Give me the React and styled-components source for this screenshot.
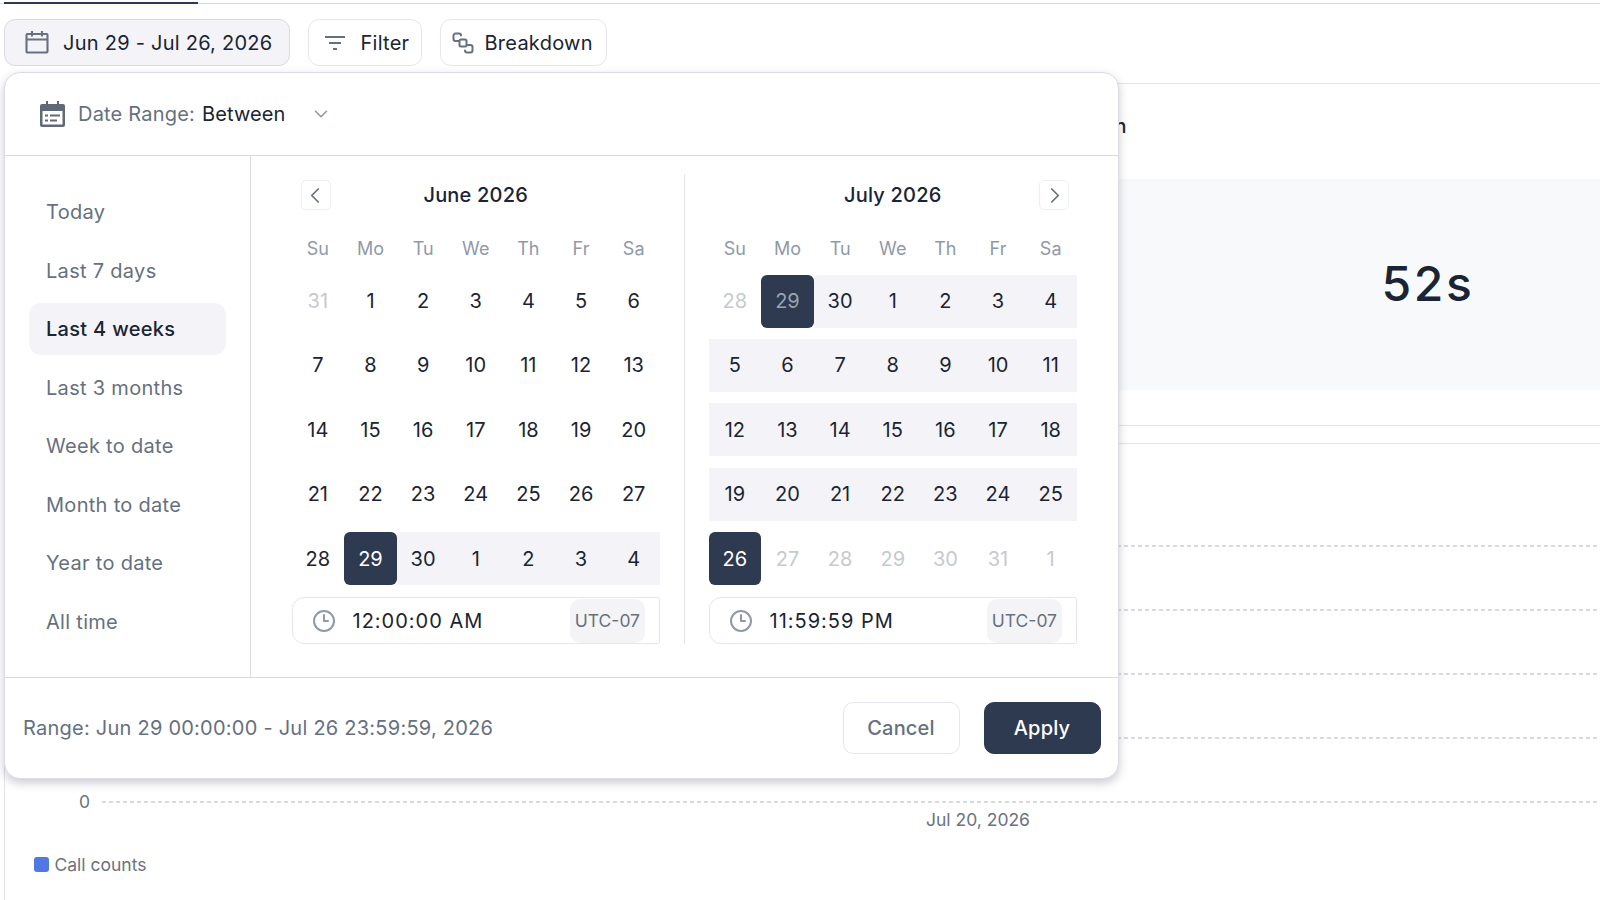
import * as React from "react";
import styled, { createGlobalStyle } from "styled-components";
import { ChevronDown, ChevronLeft, ChevronRight, Clock3 } from "lucide-react";

const GlobalStyle = createGlobalStyle`
  html,
  body {
    margin: 0;
    background: #fff;
  }
  * {
    box-sizing: border-box;
  }
`;

const Page = styled.div`
  position: relative;
  width: 1600px;
  height: 900px;
  overflow: hidden;
  background: #fff;
  color: #1a2433;
  font-family: Inter, "Liberation Sans", sans-serif;
  font-size: 20px;
`;

const TabLine = styled.div`
  height: 4px;
  border-bottom: 1.5px solid #d9dae3;
  padding-left: 4px;
`;

const ActiveTab = styled.div`
  width: 194px;
  height: 4px;
  border-bottom: 2px solid #2d3a4f;
`;

const Toolbar = styled.div`
  display: flex;
  gap: 17.5px;
  padding: 15px 0 0 4px;
`;

const ToolButton = styled.div`
  display: flex;
  align-items: center;
  gap: ${(p) => p.$gap}px;
  width: ${(p) => p.$width}px;
  height: 47px;
  padding-left: ${(p) => p.$pad}px;
  background: ${(p) => (p.$active ? "#f4f4f8" : "#fff")};
  border: 1.5px solid ${(p) => (p.$active ? "#d9dae6" : "#e6e7ee")};
  border-radius: 11px;
  letter-spacing: 0.25px;
`;

const Card = styled.div`
  width: 2000px;
  height: 840px;
  margin: 17px 0 0 4px;
  border: 1.5px solid #e3e4ea;
  border-radius: 16px;
`;

const Summary = styled.div`
  margin-left: 950px;
  padding-bottom: 35px;
  border-bottom: 1.5px solid #e3e4ea;
`;

const SummaryTitle = styled.div`
  height: 95px;
  padding: 29.5px 0 0 8px;
  font-weight: 500;
  line-height: 24px;
`;

const MetricBox = styled.div`
  display: flex;
  align-items: center;
  justify-content: center;
  width: 946px;
  height: 211px;
  padding-bottom: 2px;
  background: #f8f9fa;
  font-size: 48px;
  font-weight: 450;
  letter-spacing: 2.6px;
`;

const ChartHead = styled.div`
  height: 18px;
  border-bottom: 1.5px solid #e3e4ea;
`;

const Plot = styled.div`
  display: flex;
  flex-direction: column;
  gap: 62.5px;
  padding-top: 101px;
`;

const GridRow = styled.div`
  display: flex;
  align-items: center;
  gap: 12px;
  height: 1.5px;
`;

const AxisValue = styled.span`
  width: 85px;
  text-align: right;
  color: #6b7280;
  font-size: 17.5px;
`;

const GridLine = styled.div`
  flex: 1;
  height: 1.5px;
  background: repeating-linear-gradient(to right, #d8dae0 0 4px, transparent 4px 7px);
`;

const AxisDate = styled.div`
  margin: 7px 0 0 921px;
  color: #6b7280;
  font-size: 17.5px;
  line-height: 20px;
`;

const Legend = styled.div`
  display: flex;
  align-items: center;
  gap: 6px;
  margin: 25px 0 0 28.5px;
  color: #6b7280;
  font-size: 17.5px;
  line-height: 20px;
`;

const LegendSwatch = styled.span`
  width: 15px;
  height: 15px;
  border-radius: 3px;
  background: #4f78e4;
`;

const Popover = styled.div`
  position: absolute;
  top: 72px;
  left: 4px;
  display: flex;
  flex-direction: column;
  width: 1115px;
  height: 707px;
  background: #fff;
  border: 1.5px solid #dcdce8;
  border-radius: 16px;
  box-shadow: 0 4px 10px rgba(70, 70, 100, 0.28);
`;

const PopoverHead = styled.div`
  display: flex;
  align-items: center;
  height: 83px;
  padding-left: 34px;
  border-bottom: 1.5px solid #d9dae6;
`;

const HeadLabel = styled.span`
  margin-left: 12px;
  color: #667080;
  letter-spacing: 0.2px;
`;

const HeadValue = styled.span`
  margin-left: 7px;
  color: #1a2433;
  letter-spacing: 0.1px;
`;

const HeadCaret = styled(ChevronDown)`
  margin-left: 25px;
  color: #8f99a8;
`;

const PopoverBody = styled.div`
  display: flex;
  height: 522px;
  border-bottom: 1.5px solid #d9dae6;
`;

const Sidebar = styled.div`
  display: flex;
  flex-direction: column;
  gap: 6.5px;
  width: 245.5px;
  padding: 30px 0 0 24px;
  border-right: 1.5px solid #d9dae6;
`;

const Preset = styled.div`
  display: flex;
  align-items: center;
  width: 197px;
  height: 52px;
  padding-left: 17px;
  border-radius: 12px;
  background: ${(p) => (p.$active ? "#f4f4f8" : "transparent")};
  color: ${(p) => (p.$active ? "#1a2433" : "#667080")};
  font-weight: ${(p) => (p.$active ? 500 : 400)};
  letter-spacing: 0.3px;
`;

const Calendars = styled.div`
  display: flex;
  gap: 23.5px;
  padding: 18px 0 0 41px;
`;

const Divider = styled.div`
  width: 1.5px;
  height: 470px;
  background: #e3e4ea;
`;

const Month = styled.div`
  width: 368.5px;
  padding-top: 6px;
`;

const MonthHead = styled.div`
  position: relative;
  display: flex;
  align-items: center;
  justify-content: center;
  height: 30px;
  font-weight: 500;
  letter-spacing: 0.2px;
`;

const NavButton = styled.div`
  position: absolute;
  top: 0;
  ${(p) => (p.$right ? "right: 8px; padding-left: 2px;" : "left: 9px; padding-right: 2px;")}
  display: flex;
  align-items: center;
  justify-content: center;
  width: 30px;
  height: 30px;
  border: 1px solid #eeeff3;
  border-radius: 5px;
  color: #667080;
`;

const Week = styled.div`
  display: grid;
  grid-template-columns: repeat(7, 1fr);
`;

const WeekHead = styled(Week)`
  height: 20px;
  margin: 28.5px 0 16px;
  color: #8f99a8;
  font-size: 18px;
  line-height: 20px;
  text-align: center;
`;

const Weeks = styled.div`
  display: flex;
  flex-direction: column;
  gap: 11.4px;
`;

const dayBackground = (p) => {
  if (p.$edge) return "#2d3a4f";
  return p.$range ? "#f4f4f8" : "transparent";
};

const dayColor = (p) => {
  if (p.$edge) return p.$muted ? "#9aa3b2" : "#fff";
  return p.$muted ? "#c6c9cf" : "#1a2433";
};

const Day = styled.div`
  display: flex;
  align-items: center;
  justify-content: center;
  height: 53px;
  border-radius: ${(p) => (p.$edge ? "6px" : "0")};
  background: ${dayBackground};
  color: ${dayColor};
`;

const TimeField = styled.div`
  display: flex;
  align-items: center;
  height: 47px;
  margin-top: 12px;
  padding: 0 14px 0 19px;
  border: 1.5px solid #e6e7ee;
  border-right-width: 1px;
  border-radius: 12px 2px 2px 12px;
`;

const TimeClock = styled(Clock3)`
  flex: none;
  color: #8f99a8;
`;

const TimeValue = styled.span`
  flex: 1;
  margin-left: 17px;
  letter-spacing: 1px;
  line-height: 22px;
`;

const ZoneTag = styled.span`
  display: flex;
  align-items: center;
  height: 44px;
  padding: 0 5px;
  border-radius: 10px;
  background: #f4f4f6;
  color: #667080;
  font-size: 17.5px;
`;

const PopoverFoot = styled.div`
  display: flex;
  flex: 1;
  align-items: center;
  gap: 24px;
  padding: 0 17.5px 0 18px;
`;

const RangeText = styled.span`
  flex: 1;
  color: #667080;
  letter-spacing: 0.24px;
`;

const FootButton = styled.div`
  display: flex;
  align-items: center;
  justify-content: center;
  width: 117px;
  height: 52px;
  border: 1.5px solid ${(p) => (p.$primary ? "#2d3a4f" : "#e6e7ee")};
  border-radius: 10px;
  background: ${(p) => (p.$primary ? "#2d3a4f" : "#fff")};
  color: ${(p) => (p.$primary ? "#fff" : "#667080")};
  font-weight: 500;
  letter-spacing: 0.2px;
`;

const CalendarIcon = () => (
  <svg width="24" height="24" viewBox="0 0 24 24" fill="none" stroke="#667080" strokeWidth="2.1">
    <rect x="1.5" y="3" width="21" height="18.5" rx="1" />
    <path d="M1.5 8.5h21M7 0v5.5M17 0v5.5" />
  </svg>
);

const FilterIcon = () => (
  <svg width="24" height="24" viewBox="0 0 24 24" fill="none" stroke="#667080" strokeWidth="2">
    <path d="M2 6h20M6 12h12M10 18h4" />
  </svg>
);

const BreakdownIcon = () => (
  <svg width="24" height="24" viewBox="0 0 24 24" fill="none" stroke="#667080" strokeWidth="2" strokeLinecap="round">
    <path d="M7.5 10H4.5a2 2 0 0 1-2-2V4.5a2 2 0 0 1 2-2H8a2 2 0 0 1 2 2" />
    <rect x="8.5" y="8.5" width="7" height="7" rx="1.5" />
    <path d="M16.5 14h3a2 2 0 0 1 2 2v3.5a2 2 0 0 1-2 2H16a2 2 0 0 1-2-2" />
  </svg>
);

const RangeIcon = () => (
  <svg width="27" height="27" viewBox="0 0 27 27">
    <path d="M7 0h2v3h9V0h2v3h4a2 2 0 0 1 2 2v19a2 2 0 0 1-2 2H3a2 2 0 0 1-2-2V5a2 2 0 0 1 2-2h4z" fill="#5f6977" />
    <rect x="3.5" y="10" width="20" height="13.5" fill="#fff" />
    <path d="M6 13.5h3v2H6zM11 13.5h10v2H11zM6 18.5h3v2H6zM11 18.5h7v2h-7z" fill="#5f6977" />
  </svg>
);

const june = [
  [31, 1, 2, 3, 4, 5, 6],
  [7, 8, 9, 10, 11, 12, 13],
  [14, 15, 16, 17, 18, 19, 20],
  [21, 22, 23, 24, 25, 26, 27],
  [28, 29, 30, 1, 2, 3, 4],
];

const july = [
  [28, 29, 30, 1, 2, 3, 4],
  [5, 6, 7, 8, 9, 10, 11],
  [12, 13, 14, 15, 16, 17, 18],
  [19, 20, 21, 22, 23, 24, 25],
  [26, 27, 28, 29, 30, 31, 1],
];

const weekdays = ["Su", "Mo", "Tu", "We", "Th", "Fr", "Sa"];

const presets = [
  "Today",
  "Last 7 days",
  "Last 4 weeks",
  "Last 3 months",
  "Week to date",
  "Month to date",
  "Year to date",
  "All time",
];

const juneDay = (row, col) => ({
  $muted: row === 0 && col === 0,
  $edge: row === 4 && col === 1,
  $range: row === 4 && col > 1,
});

const julyDay = (row, col) => ({
  $muted: (row === 0 && col < 2) || (row === 4 && col > 0),
  $edge: (row === 0 && col === 1) || (row === 4 && col === 0),
  $range: (row === 0 && col > 1) || (row > 0 && row < 4),
});

const CalendarMonth = ({ title, weeks, dayProps, time, side }) => (
  <Month>
    <MonthHead>
      {side === "left" && (
        <NavButton>
          <ChevronLeft size={27} strokeWidth={1.6} />
        </NavButton>
      )}
      {title}
      {side === "right" && (
        <NavButton $right>
          <ChevronRight size={27} strokeWidth={1.6} />
        </NavButton>
      )}
    </MonthHead>
    <WeekHead>
      {weekdays.map((day) => (
        <span key={day}>{day}</span>
      ))}
    </WeekHead>
    <Weeks>
      {weeks.map((week, row) => (
        <Week key={row}>
          {week.map((day, col) => (
            <Day key={col} {...dayProps(row, col)}>
              {day}
            </Day>
          ))}
        </Week>
      ))}
    </Weeks>
    <TimeField>
      <TimeClock size={24} strokeWidth={2} />
      <TimeValue>{time}</TimeValue>
      <ZoneTag>UTC-07</ZoneTag>
    </TimeField>
  </Month>
);

export default function App() {
  return (
    <Page>
      <GlobalStyle />
      <TabLine>
        <ActiveTab />
      </TabLine>
      <Toolbar>
        <ToolButton $active $width={286} $pad={20} $gap={14}>
          <CalendarIcon />
          Jun 29 - Jul 26, 2026
        </ToolButton>
        <ToolButton $width={114.5} $pad={14} $gap={14}>
          <FilterIcon />
          Filter
        </ToolButton>
        <ToolButton $width={167.5} $pad={10} $gap={10}>
          <BreakdownIcon />
          Breakdown
        </ToolButton>
      </Toolbar>
      <Card>
        <Summary>
          <SummaryTitle>Average duration</SummaryTitle>
          <MetricBox>52s</MetricBox>
        </Summary>
        <ChartHead />
        <Plot>
          {["", "", "", "", "0"].map((value, i) => (
            <GridRow key={i}>
              <AxisValue>{value}</AxisValue>
              <GridLine />
            </GridRow>
          ))}
        </Plot>
        <AxisDate>Jul 20, 2026</AxisDate>
        <Legend>
          <LegendSwatch />
          Call counts
        </Legend>
      </Card>
      <Popover>
        <PopoverHead>
          <RangeIcon />
          <HeadLabel>Date Range:</HeadLabel>
          <HeadValue>Between</HeadValue>
          <HeadCaret size={22} strokeWidth={1.75} />
        </PopoverHead>
        <PopoverBody>
          <Sidebar>
            {presets.map((preset) => (
              <Preset key={preset} $active={preset === "Last 4 weeks"}>
                {preset}
              </Preset>
            ))}
          </Sidebar>
          <Calendars>
            <CalendarMonth title="June 2026" weeks={june} dayProps={juneDay} time="12:00:00 AM" side="left" />
            <Divider />
            <CalendarMonth title="July 2026" weeks={july} dayProps={julyDay} time="11:59:59 PM" side="right" />
          </Calendars>
        </PopoverBody>
        <PopoverFoot>
          <RangeText>Range: Jun 29 00:00:00 - Jul 26 23:59:59, 2026</RangeText>
          <FootButton>Cancel</FootButton>
          <FootButton $primary>Apply</FootButton>
        </PopoverFoot>
      </Popover>
    </Page>
  );
}
